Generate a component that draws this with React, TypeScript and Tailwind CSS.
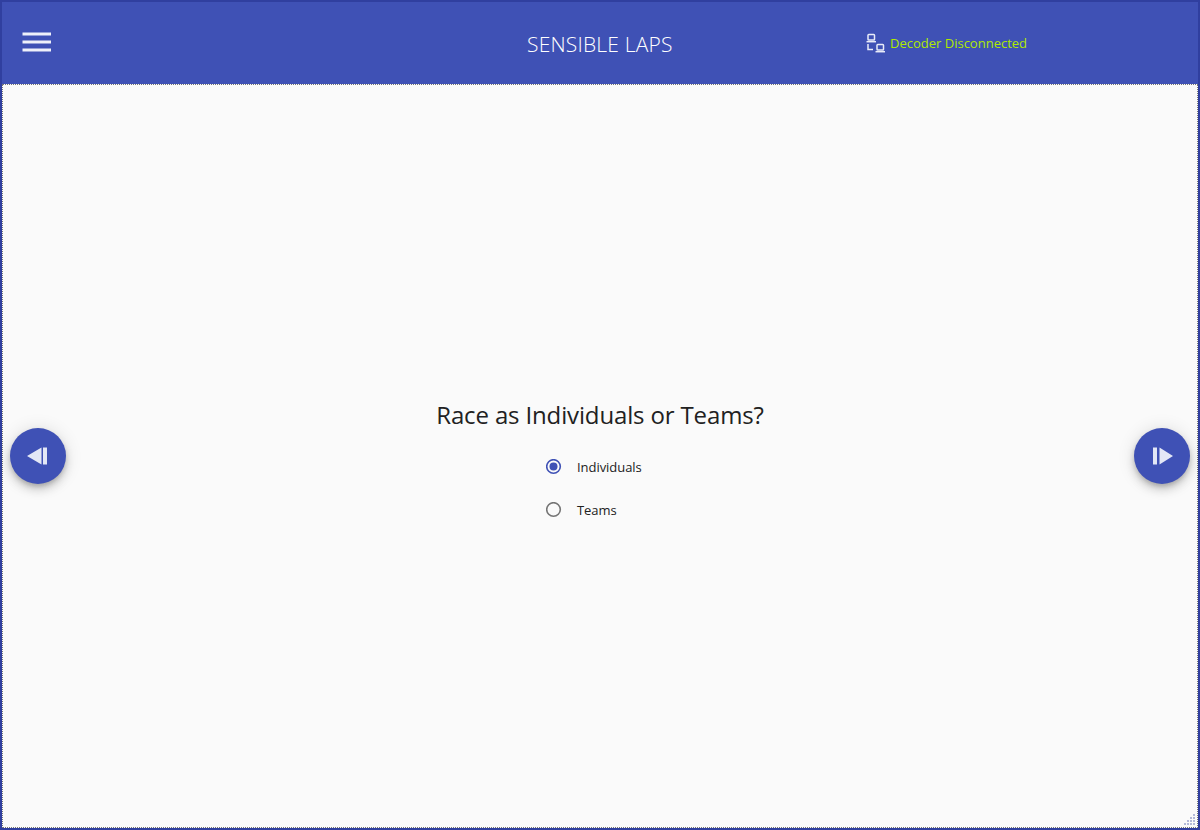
import React from "react";

function RoundButton({ dir }: { dir: "prev" | "next" }) {
  return (
    <button className="w-14 h-14 rounded-full bg-[#3f51b5] flex items-center justify-center shadow-[0_3px_5px_-1px_rgba(0,0,0,0.2),0_6px_10px_0_rgba(0,0,0,0.14),0_1px_18px_0_rgba(0,0,0,0.12)]">
      <svg width="24" height="24" viewBox="0 0 24 24" fill="#e3e7f6">
        {dir === "prev" ? (
          <path d="M1 12 L15.500 3.500 V20.500 Z M17 3.500 H21 V20.500 H17 Z" />
        ) : (
          <path d="M23 12 L9.500 3.500 V20.500 Z M3 3.500 H7 V20.500 H3 Z" />
        )}
      </svg>
    </button>
  );
}

function Radio({ checked, label }: { checked?: boolean; label: string }) {
  const color = checked ? "#3f51b5" : "#757575";
  return (
    <label className="flex items-center h-[43px]">
      <svg width="16" height="16" viewBox="0 0 16 16" fill="none">
        <circle cx="7.500" cy="7.500" r="6.800" stroke={color} strokeWidth="1.600" />
        {checked && <circle cx="7.500" cy="7.500" r="4" fill={color} />}
      </svg>
      <span className="ml-[15px] pt-[2px] text-[13px] text-[#212121] tracking-[-0.05px]">{label}</span>
    </label>
  );
}

export default function App() {
  return (
    <div className="w-[1200px] h-[830px] bg-[#303f9f] p-[2px] flex flex-col font-['Open_Sans','Liberation_Sans',sans-serif] overflow-hidden">
      <header className="relative h-[82px] shrink-0 bg-[#3f51b5] flex items-center">
        <svg className="ml-[20px] mb-[2px]" width="30" height="20" viewBox="0 0 30 20">
          <g fill="#eef0fa">
            <rect x="0.500" y="0.500" width="28.500" height="3" />
            <rect x="0.500" y="8.500" width="28.500" height="3" />
            <rect x="0.500" y="16.500" width="28.500" height="3" />
          </g>
        </svg>
        <h1 className="absolute left-[525px] top-[28px] text-[21px] leading-[28px] text-white tracking-[0.2px] font-light">
          SENSIBLE LAPS
        </h1>
        <div className="absolute left-[863px] top-[31px] flex items-center">
          <svg width="20" height="20" viewBox="0 0 20 20" fill="none" stroke="#e8ebf8" strokeWidth="1.500">
            <rect x="3" y="1.500" width="6.500" height="5.500" rx="0.800" />
            <path d="M1.500 8.700 H11" />
            <rect x="12" y="11.500" width="6.500" height="5.500" rx="0.800" />
            <path d="M10.500 18.700 H20" />
            <path d="M3 11 V16.500 H8" />
          </svg>
          <span className="ml-[5px] text-[13px] leading-[20px] text-[#aeea00]">Decoder Disconnected</span>
        </div>
      </header>
      <main className="relative flex-1 bg-[#fafafa] border border-dotted border-[#757575] flex flex-col items-center">
        <h2 className="mt-[314px] text-[24px] leading-[32px] text-[#212121] tracking-[-0.14px]">
          Race as Individuals or Teams?
        </h2>
        <div className="mt-[14px] w-[108px] flex flex-col">
          <Radio checked label="Individuals" />
          <Radio label="Teams" />
        </div>
        <div className="absolute left-[7px] top-[343px]">
          <RoundButton dir="prev" />
        </div>
        <div className="absolute right-[7px] top-[343px]">
          <RoundButton dir="next" />
        </div>
        <svg className="absolute right-0 bottom-0" width="14" height="14" viewBox="0 0 14 14" fill="#b4bad8">
          <rect x="10" y="1" width="2" height="2" />
          <rect x="7" y="4" width="2" height="2" />
          <rect x="10" y="4" width="2" height="2" />
          <rect x="4" y="7" width="2" height="2" />
          <rect x="7" y="7" width="2" height="2" />
          <rect x="10" y="7" width="2" height="2" />
          <rect x="1" y="10" width="2" height="2" />
          <rect x="4" y="10" width="2" height="2" />
          <rect x="7" y="10" width="2" height="2" />
          <rect x="10" y="10" width="2" height="2" />
        </svg>
      </main>
    </div>
  );
}
